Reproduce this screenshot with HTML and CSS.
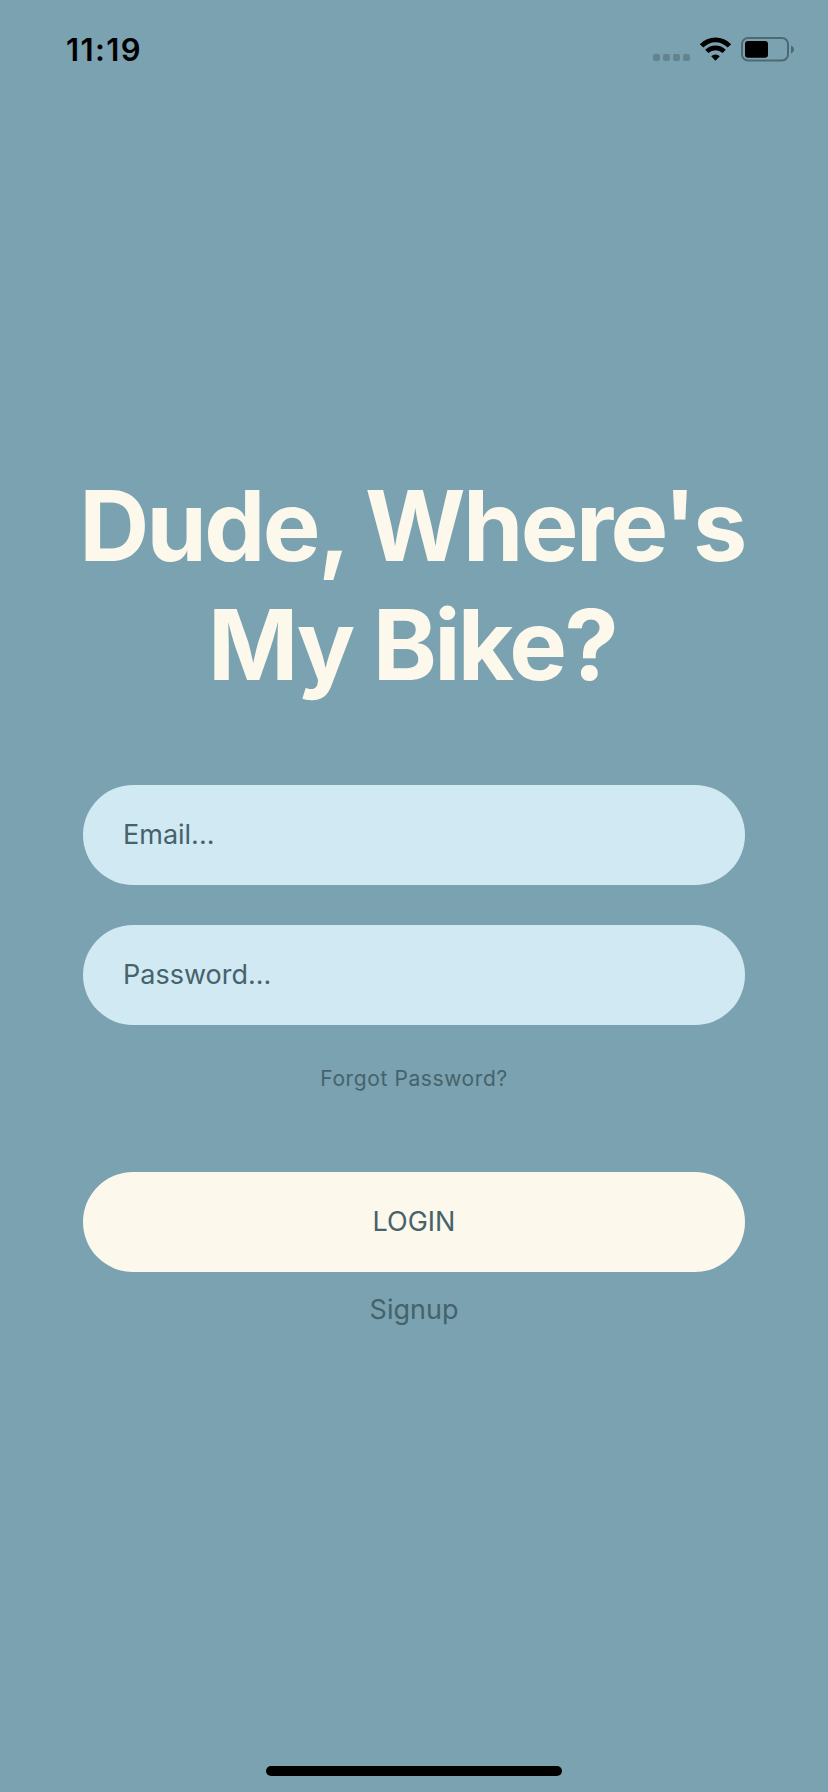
FILE: index.html
```html
<!DOCTYPE html>
<html lang="en">
<head>
<meta charset="utf-8">
<title>Dude, Where's My Bike?</title>
<link rel="stylesheet" href="styles.css">
</head>
<body>
<div class="screen">
  <header class="status">
    <span class="time">11:19</span>
    <svg class="indicators" width="142" height="26" viewBox="0 0 142 26">
      <g fill="#62848f"><rect x="0" y="18" width="7" height="7" rx="2"/><rect x="10" y="18" width="7" height="7" rx="2"/><rect x="20" y="18" width="7" height="7" rx="2"/><rect x="30" y="18" width="7" height="7" rx="2"/></g>
      <path d="M46.800 8.200A22 22 0 0 1 78.200 8.200L74.700 11.500A17 17 0 0 0 50.300 11.500Z"/>
      <path d="M52.200 13.700A14.500 14.500 0 0 1 72.800 13.700L69.600 17A10.500 10.500 0 0 0 55.400 17Z"/>
      <path d="M58.200 20.200A6.500 6.500 0 0 1 66.800 20.200L62.500 24.800Z"/>
      <rect x="89" y="2" width="46" height="22.500" rx="6" fill="none" stroke="#4d6a73" stroke-width="2"/>
      <rect x="92" y="5" width="23" height="16.700" rx="3"/>
      <path d="M138 9.500c4 1.500 4 6.500 0 8z" fill="#4d6a73"/>
    </svg>
  </header>
  <main class="login">
    <h1 class="title">Dude, Where's<br>My Bike?</h1>
    <form class="form">
      <input class="field" type="text" placeholder="Email..." aria-label="Email">
      <input class="field" type="text" placeholder="Password..." aria-label="Password">
      <a class="forgot">Forgot Password?</a>
      <button class="submit" type="button">LOGIN</button>
      <a class="signup">Signup</a>
    </form>
  </main>
  <div class="home"></div>
</div>
</body>
</html>
```
FILE: styles.css
```css
* { box-sizing: border-box; }
body { margin: 0; background: #7aa2b0; font-family: Inter, sans-serif; }
.screen { height: 1792px; display: flex; flex-direction: column; align-items: center; }
.status { width: 100%; height: 88px; padding: 36px 33px 0 66px; display: flex; justify-content: space-between; align-items: flex-start; }
.time { font-size: 31px; font-weight: 600; line-height: 28px; letter-spacing: 1.4px; }
.login { width: 662px; flex: 1; padding-top: 378px; }
.title { margin: 0 -28px 0 -32px; color: #fdf8ec; font-size: 97px; line-height: 119px; font-weight: 700; text-align: center; white-space: nowrap; letter-spacing: -2.65px; }
.form { margin-top: 81px; display: flex; flex-direction: column; }
.field { height: 100px; margin: 0 0 40px; padding: 0 40px 2px; border: 0; border-radius: 50px; background: #d1e9f3; font: 27px Inter, sans-serif; }
.field::placeholder { color: #46626b; opacity: 1; }
.forgot { font-size: 21px; letter-spacing: 0.6px; line-height: 28px; text-align: center; color: #46626b; }
.submit { height: 100px; margin-top: 79px; padding: 0 0 2px; border: 0; border-radius: 50px; background: #fdf8ec; color: #46626b; font: 27px Inter, sans-serif; }
.signup { margin-top: 20px; font-size: 27px; line-height: 36px; text-align: center; color: #46626b; }
.home { width: 296px; height: 10px; margin-bottom: 16px; border-radius: 5px; background: #000; }
```
